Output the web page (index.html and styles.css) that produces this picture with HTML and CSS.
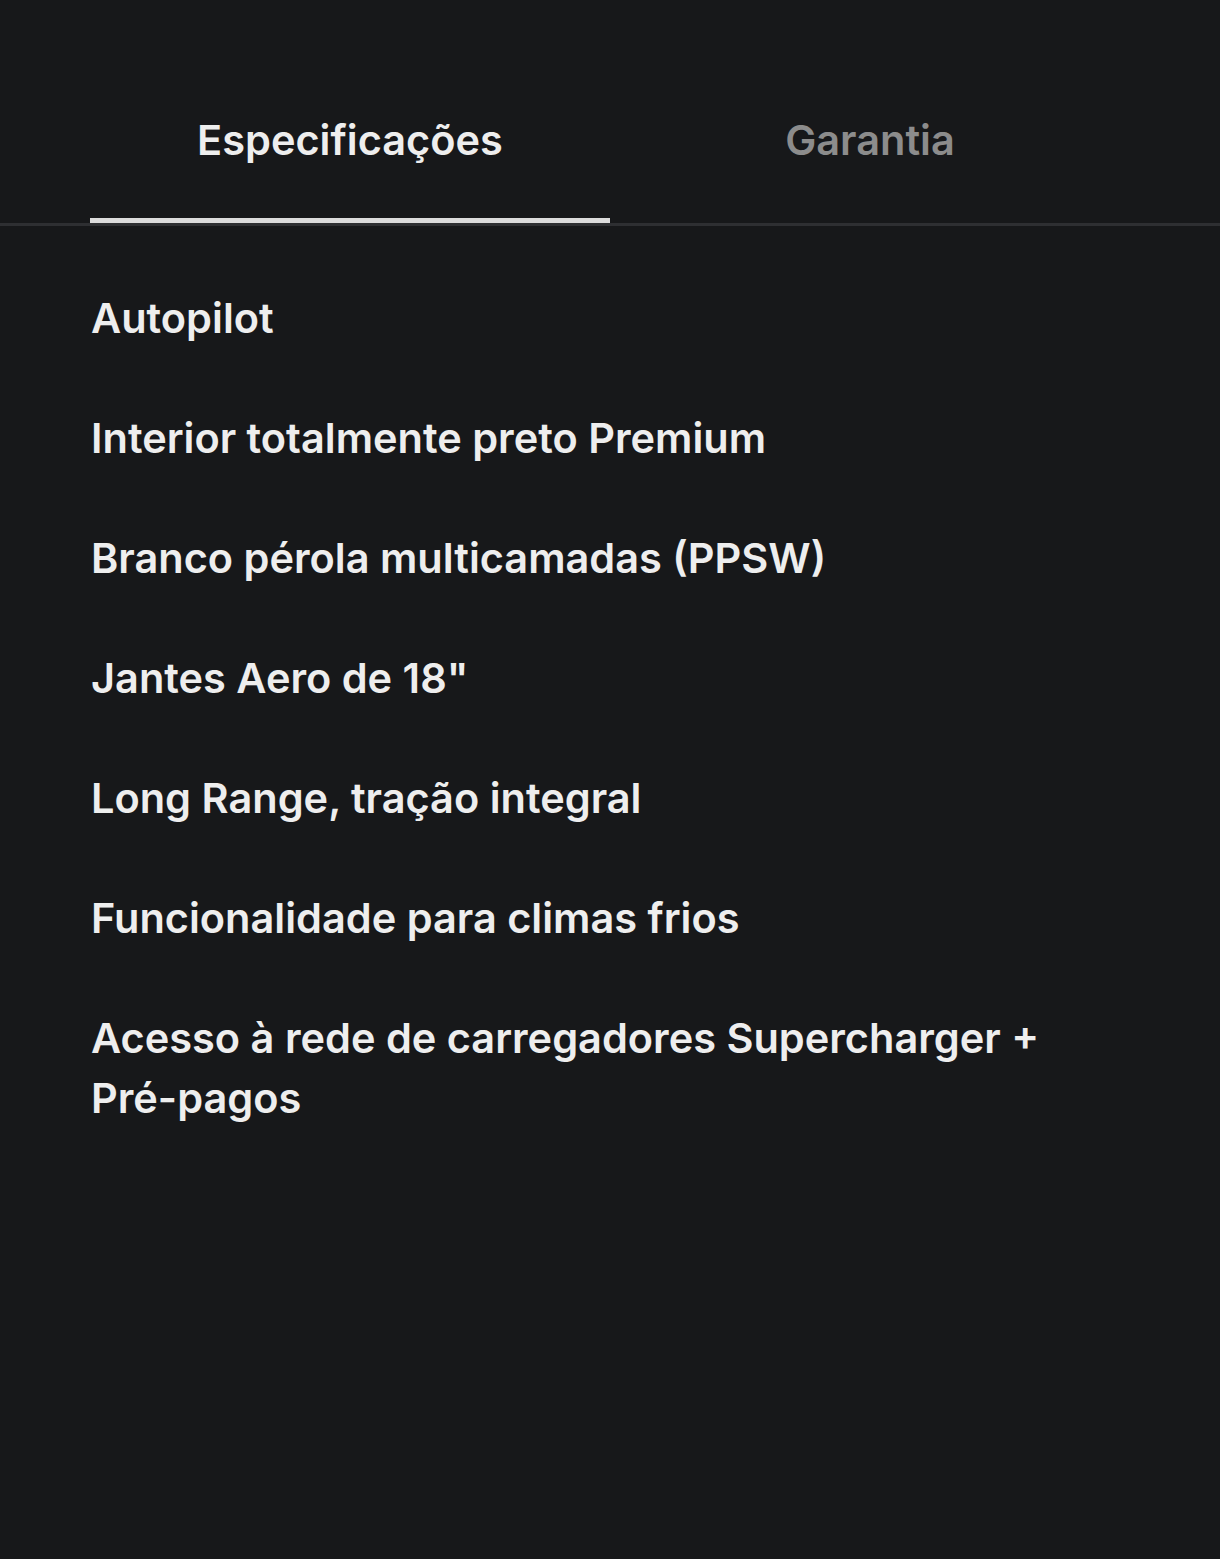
FILE: index.html
```html
<!DOCTYPE html>
<html lang="pt">
  <head>
    <meta charset="UTF-8" />
    <meta name="viewport" content="width=device-width, initial-scale=1.0" />
    <title>Especificações</title>
    <link rel="stylesheet" href="styles.css">
  </head>
  <body>
    <div class="tabs">
      <div class="tab active">Especificações</div>
      <div class="tab">Garantia</div>
    </div>
    <ul class="specs">
      <li>Autopilot</li>
      <li>Interior totalmente preto Premium</li>
      <li>Branco pérola multicamadas (PPSW)</li>
      <li>Jantes Aero de 18"</li>
      <li>Long Range, tração integral</li>
      <li>Funcionalidade para climas frios</li>
      <li>Acesso à rede de carregadores Supercharger + <span class="nowrap">Pré-pagos</span></li>
    </ul>
  </body>
</html>
```

FILE: styles.css
```css
body {
  margin: 0;
  min-height: 100vh;
  background-color: #17181a;
  color: #eeeeee;
  font-family: Inter, "Noto Sans", sans-serif;
  font-weight: 600;
  font-size: 41.5px;
}

.tabs {
  display: flex;
  padding: 0 90px;
  border-bottom: 3px solid #2e2f32;
}

.tab {
  width: 520px;
  padding-top: 110px;
  padding-bottom: 48px;
  line-height: 60px;
  text-align: center;
  color: #8c8c8c;
  border-bottom: 5px solid transparent;
}

.tab.active {
  color: #eeeeee;
  border-bottom-color: #dcdcdc;
}

.specs {
  list-style: none;
  margin: 0;
  padding: 62px 90px 0 91px;
}

.specs li {
  line-height: 60px;
  margin-bottom: 60px;
}

.nowrap {
  white-space: nowrap;
}
```
